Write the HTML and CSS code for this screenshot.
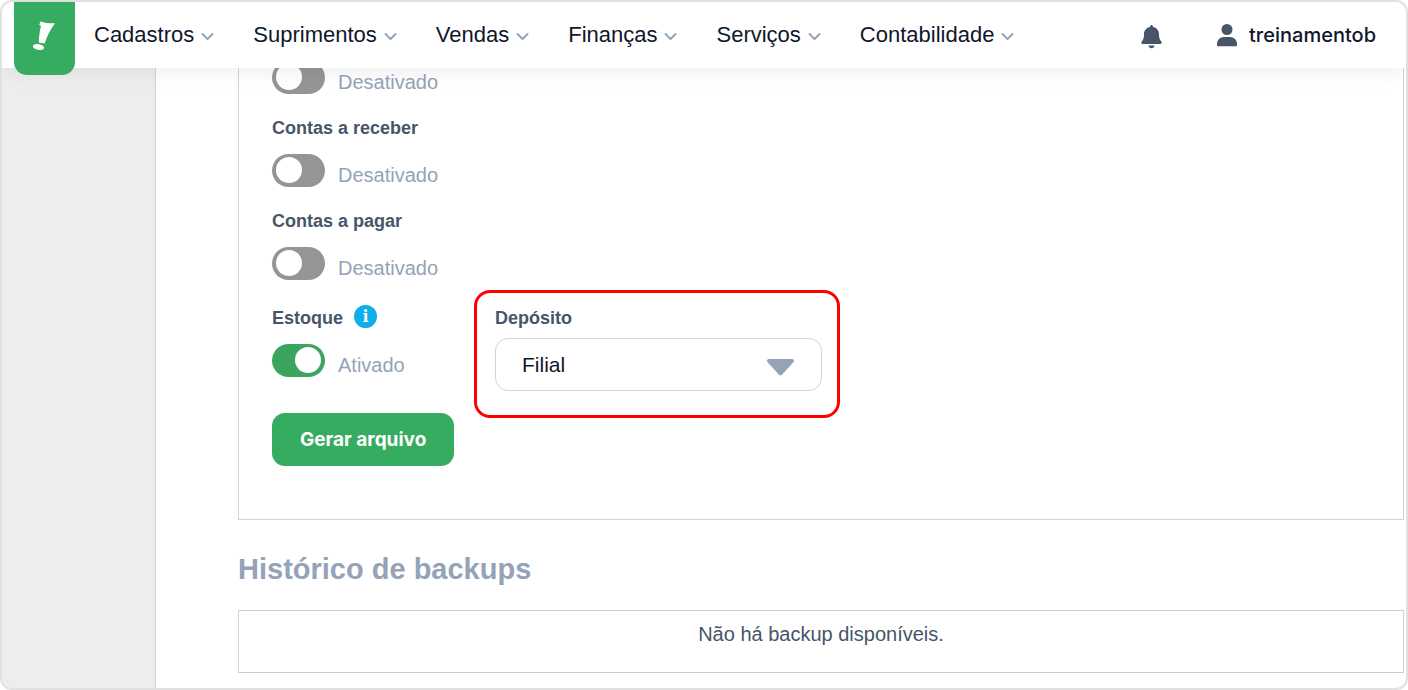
FILE: index.html
```html
<!DOCTYPE html>
<html lang="pt-BR">
<head>
    <meta charset="UTF-8">
    <meta name="viewport" content="width=device-width, initial-scale=1.0">
    <title>Backup</title>
    <link rel="stylesheet" href="styles.css">
</head>
<body>
    <div class="app">
        <header class="topbar">
            <a class="logo" href="#" aria-label="Início">
                <svg width="61" height="73" viewBox="0 0 61 73" fill="#fff">
                    <path d="M26.300 19.600c4.500 1.600 9 1.800 14.700 1.700-4.300 5.700-7.800 12-10.300 20.200l-5.900-1c.1-6 .9-11.500 2.200-16.600l-1.700-.9z"/>
                    <ellipse cx="24.500" cy="45" rx="5.700" ry="2.900" transform="rotate(10 24.500 45)"/>
                </svg>
            </a>
            <nav class="menu">
                <a href="#">Cadastros <svg class="chevron" viewBox="0 0 13 14"><path d="M1.5 6l5 5 5-5"/></svg></a>
                <a href="#">Suprimentos <svg class="chevron" viewBox="0 0 13 14"><path d="M1.5 6l5 5 5-5"/></svg></a>
                <a href="#">Vendas <svg class="chevron" viewBox="0 0 13 14"><path d="M1.5 6l5 5 5-5"/></svg></a>
                <a href="#">Finanças <svg class="chevron" viewBox="0 0 13 14"><path d="M1.5 6l5 5 5-5"/></svg></a>
                <a href="#">Serviços <svg class="chevron" viewBox="0 0 13 14"><path d="M1.5 6l5 5 5-5"/></svg></a>
                <a href="#">Contabilidade <svg class="chevron" viewBox="0 0 13 14"><path d="M1.5 6l5 5 5-5"/></svg></a>
            </nav>
            <div class="account">
                <button class="bell" type="button" aria-label="Notificações">
                    <svg width="21" height="24" viewBox="0 0 21 24" fill="#475569">
                        <path d="M10.500 0c.8 0 1.400.6 1.400 1.300v.8c3.600.6 6.100 3.400 6.100 7.200 0 4.100.8 5.700 2.300 7.200.8.900.3 2.500-.9 2.500H1.600c-1.200 0-1.700-1.600-.9-2.500C2.200 15 3 13.400 3 9.300c0-3.800 2.500-6.600 6.100-7.200v-.8C9.100.6 9.700 0 10.500 0z"/>
                        <path d="M7.500 20.500h6c-.2 1.700-1.400 2.700-3 2.700s-2.800-1-3-2.700z"/>
                    </svg>
                </button>
                <a class="user" href="#">
                    <svg width="20" height="23" viewBox="0 0 20 23" fill="#475569">
                        <circle cx="10" cy="5.500" r="5.500"/>
                        <path d="M0 21v-1c0-4 3-7 7-7h6c4 0 7 3 7 7v1c0 .8-.5 1.300-1.300 1.300H1.300C.5 22.300 0 21.800 0 21z"/>
                    </svg>
                    treinamentob
                </a>
            </div>
        </header>

        <div class="page">
            <aside class="sidebar"></aside>

            <main class="content">
                <form class="panel">
                    <div class="field">
                        <div class="switch">
                            <input type="checkbox" id="pedidos">
                            <label for="pedidos">Desativado</label>
                        </div>
                    </div>

                    <div class="field">
                        <label class="field-label" for="contasReceber">Contas a receber</label>
                        <div class="switch">
                            <input type="checkbox" id="contasReceber">
                            <label for="contasReceber">Desativado</label>
                        </div>
                    </div>

                    <div class="field">
                        <label class="field-label" for="contasPagar">Contas a pagar</label>
                        <div class="switch">
                            <input type="checkbox" id="contasPagar">
                            <label for="contasPagar">Desativado</label>
                        </div>
                    </div>

                    <div class="field-row">
                        <div class="field stock">
                            <div class="label-info">
                                <label class="field-label" for="estoque">Estoque</label>
                                <button class="info" type="button">i</button>
                            </div>
                            <div class="switch">
                                <input type="checkbox" id="estoque" checked>
                                <label for="estoque">Ativado</label>
                            </div>
                        </div>

                        <div class="deposit">
                            <label class="field-label" for="deposito">Depósito</label>
                            <div class="select">
                                <select id="deposito">
                                    <option>Filial</option>
                                </select>
                                <svg class="caret" viewBox="0 0 27 17"><path d="M2 0h23c2 0 2.600 2 1.400 3.300L15 15.800c-.9 1-2.100 1-3 0L.6 3.300C-.6 2 0 0 2 0z"/></svg>
                            </div>
                        </div>
                    </div>

                    <button class="submit" type="button">Gerar arquivo</button>
                </form>

                <h2>Histórico de backups</h2>
                <table class="history">
                    <tbody>
                        <tr>
                            <td>Não há backup disponíveis.</td>
                        </tr>
                    </tbody>
                </table>
            </main>
        </div>
    </div>
</body>
</html>
```
FILE: styles.css
```css
* {
    box-sizing: border-box;
}
body {
    margin: 0;
    font-family: "Liberation Sans", Arial, sans-serif;
    font-size: 20px;
    line-height: 24px;
    color: #475569;
    background-color: #fff;
}
a {
    color: #0f172a;
    text-decoration: none;
}
button {
    border: 0;
    padding: 0;
    cursor: pointer;
}
svg {
    display: block;
    flex: none;
}
.app {
    display: flex;
    flex-direction: column;
    min-height: 100vh;
    border: 2px solid #e0e0e0;
    border-radius: 12px;
    overflow: hidden;
}

/* top bar */
.topbar {
    position: relative;
    z-index: 1;
    display: flex;
    align-items: center;
    height: 66px;
    padding: 0 30px 0 12px;
    background-color: #fff;
    box-shadow: 0 4px 20px rgba(15, 23, 42, 0.07);
}
.logo {
    align-self: flex-start;
    height: 73px;
    border-radius: 0 0 13px 13px;
    background-color: #36ac60;
}
.menu {
    display: flex;
    gap: 39px;
    margin-left: 19px;
    font-size: 22px;
}
.menu a {
    display: flex;
    align-items: center;
    gap: 7px;
}
.chevron {
    width: 13px;
    height: 14px;
    fill: none;
    stroke: #94a3b8;
    stroke-width: 2;
    stroke-linecap: round;
    stroke-linejoin: round;
}
.account {
    display: flex;
    align-items: center;
    gap: 55px;
    margin-left: auto;
}
.bell {
    padding-top: 3px;
    background: none;
}
.user {
    display: flex;
    align-items: center;
    gap: 12px;
    font-family: Inter, sans-serif;
    font-weight: 500;
}

/* page */
.page {
    display: flex;
    flex: 1;
}
.sidebar {
    width: 154px;
    flex: none;
    border-right: 1px solid #cbd5e1;
    background-color: #ededed;
}
.content {
    flex: 1;
    padding: 0 2px 15px 82px;
}
.panel {
    display: flex;
    flex-direction: column;
    align-items: flex-start;
    gap: 22px;
    padding: 0 33px 53px;
    border: 1px solid #cbd5e1;
    border-top: 0;
}
.panel > .field:first-child {
    margin-top: -7px;
}
.field {
    display: flex;
    flex-direction: column;
    gap: 13px;
}
.field-label {
    font-size: 18px;
    font-weight: bold;
    line-height: 25px;
}
.switch {
    display: flex;
    align-items: flex-end;
    gap: 13px;
    color: #94a3b8;
}
.switch input {
    appearance: none;
    display: flex;
    width: 53px;
    height: 33px;
    margin: 0;
    padding: 3px 4px;
    border-radius: 17px;
    background-color: #959595;
    cursor: pointer;
}
.switch input::before {
    content: "";
    width: 26px;
    height: 26px;
    border-radius: 50%;
    background-color: #fff;
}
.switch input:checked {
    justify-content: flex-end;
    background-color: #3ba55f;
}
.field-row {
    display: flex;
    align-items: flex-start;
}
.stock {
    width: 223px;
}
.label-info {
    display: flex;
    align-items: flex-end;
    gap: 11px;
    height: 29px;
}
.info {
    align-self: center;
    width: 23px;
    height: 23px;
    border-radius: 50%;
    background-color: #0daeea;
    color: #fff;
    font: bold 16px/23px "DejaVu Serif", serif;
}
.deposit {
    position: relative;
    display: flex;
    flex-direction: column;
    gap: 7px;
    width: 327px;
    padding-top: 4px;
}
/* highlight frame around the field */
.deposit::after {
    content: "";
    position: absolute;
    inset: -12px -18px -27px -21px;
    border: 3px solid #f00;
    border-radius: 16px;
    pointer-events: none;
}
.select {
    position: relative;
}
.select select {
    appearance: none;
    display: block;
    width: 100%;
    height: 53px;
    padding: 0 60px 0 26px;
    border: 1px solid #cbd5e1;
    border-radius: 13px;
    background-color: #fff;
    color: #0f172a;
    font-family: inherit;
    font-size: 21px;
}
.caret {
    position: absolute;
    top: 21px;
    right: 28px;
    width: 27px;
    height: 17px;
    fill: #94a3b8;
    pointer-events: none;
}
.submit {
    height: 53px;
    padding: 0 28px;
    border-radius: 13px;
    background-color: #36ac60;
    color: #fff;
    font-family: Inter, sans-serif;
    font-size: 19px;
    font-weight: bold;
}
h2 {
    margin: 31px 0 23px;
    font-size: 29px;
    line-height: 36px;
    color: #94a3b8;
}
.history {
    width: 100%;
    border: 1px solid #ccc;
    border-left-color: #cbd5e1;
    border-right-color: #cbd5e1;
    border-spacing: 0;
}
.history td {
    padding: 11px 0 26px;
    text-align: center;
}
```
